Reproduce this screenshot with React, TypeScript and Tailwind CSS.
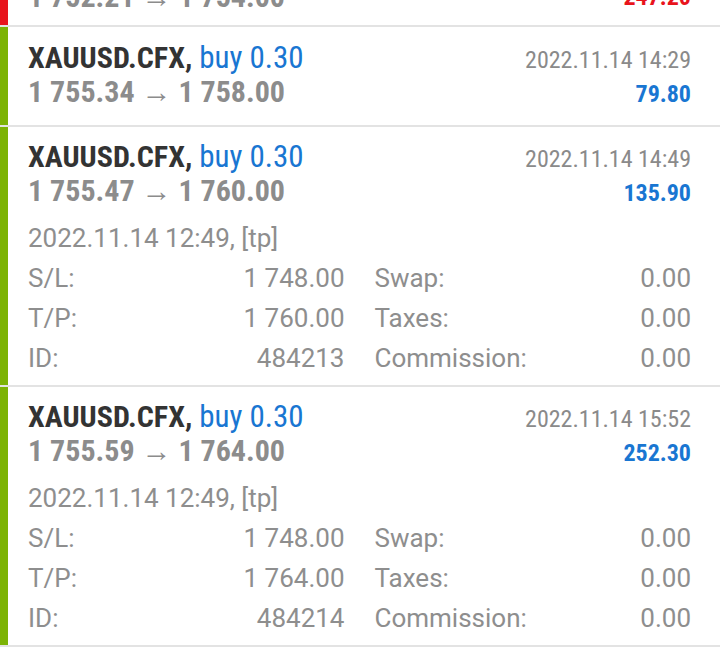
import React from "react";

type Deal = {
  bar: string;
  price: string;
  time: string;
  profit: string;
  open?: string;
  sl?: string;
  tp?: string;
  id?: string;
};

const deals: Deal[] = [
  {
    bar: "bg-[#7cb305]",
    price: "1 755.34 → 1 758.00",
    time: "2022.11.14 14:29",
    profit: "79.80",
  },
  {
    bar: "bg-[#7cb305]",
    price: "1 755.47 → 1 760.00",
    time: "2022.11.14 14:49",
    profit: "135.90",
    open: "2022.11.14 12:49, [tp]",
    sl: "1 748.00",
    tp: "1 760.00",
    id: "484213",
  },
  {
    bar: "bg-[#7cb305]",
    price: "1 755.59 → 1 764.00",
    time: "2022.11.14 15:52",
    profit: "252.30",
    open: "2022.11.14 12:49, [tp]",
    sl: "1 748.00",
    tp: "1 764.00",
    id: "484214",
  },
];

const Cell = ({ label, value }: { label: string; value: string }) => (
  <div className="flex justify-between h-[40px] items-center">
    <span>{label}</span>
    <span>{value}</span>
  </div>
);

const DealRow = ({ deal }: { deal: Deal }) => (
  <div className="flex border-b-2 border-[#e3e3e3]">
    <div className={`w-[8px] shrink-0 ${deal.bar}`} />
    <div
      className={`flex-1 pl-[20px] pr-[29px] ${
        deal.open ? "pt-[13px] pb-[7px]" : "py-[14px]"
      }`}
    >
      <div className="flex justify-between font-stretch-condensed">
        <div className="text-[30px] leading-[34px]">
          <div>
            <span className="font-bold text-[#333333]">XAUUSD.CFX,</span>{" "}
            <span className="text-[31px] text-[#1976d2]">buy 0.30</span>
          </div>
          <div className="font-bold text-[#8c8c8c]">{deal.price}</div>
        </div>
        <div className="text-right text-[24px] leading-[34px] pt-[2px]">
          <div className="text-[#8a8a8a]">{deal.time}</div>
          <div className="font-bold text-[#1976d2]">{deal.profit}</div>
        </div>
      </div>
      {deal.open && (
        <div className="mt-[8px] text-[26px] text-[#8e8e8e]">
          <div className="h-[40px] flex items-center">{deal.open}</div>
          <div className="grid grid-cols-2 gap-x-[30px]">
            <Cell label="S/L:" value={deal.sl!} />
            <Cell label="Swap:" value="0.00" />
            <Cell label="T/P:" value={deal.tp!} />
            <Cell label="Taxes:" value="0.00" />
            <Cell label="ID:" value={deal.id!} />
            <Cell label="Commission:" value="0.00" />
          </div>
        </div>
      )}
    </div>
  </div>
);

export default function App() {
  return (
    <div className="w-[720px] h-[651px] overflow-hidden bg-white font-['Roboto',sans-serif]">
      {/* previous deal, scrolled mostly out of view */}
      <div className="flex h-[27px] overflow-hidden border-b-2 border-[#e3e3e3]">
        <div className="w-[8px] shrink-0 bg-[#e8141c]" />
        <div className="flex-1 pl-[20px] pr-[29px] flex flex-col justify-end pb-[11px] font-stretch-condensed">
          <div className="flex justify-between leading-[34px]">
            <span className="text-[30px] font-bold text-[#8c8c8c]">1 752.21 → 1 754.00</span>
            <span className="text-[24px] font-bold text-[#e8141c]">-247.20</span>
          </div>
        </div>
      </div>
      {deals.map((d, i) => (
        <DealRow key={i} deal={d} />
      ))}
    </div>
  );
}
